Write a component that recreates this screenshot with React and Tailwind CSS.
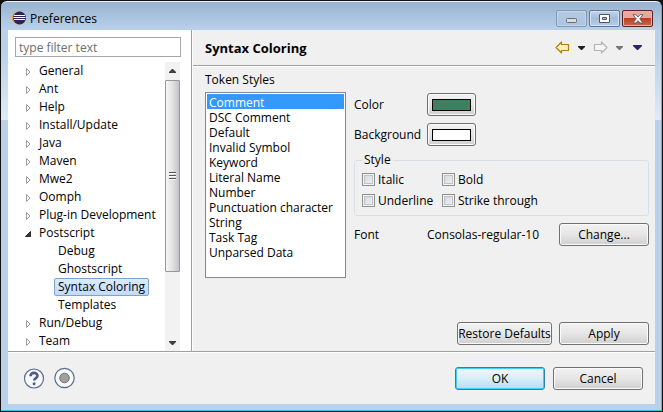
import { useState } from "react";

const tree = [
  { name: "General" }, { name: "Ant" }, { name: "Help" }, { name: "Install/Update" },
  { name: "Java" }, { name: "Maven" }, { name: "Mwe2" }, { name: "Oomph" },
  { name: "Plug-in Development" },
  { name: "Postscript", open: true },
  { name: "Debug", child: true }, { name: "Ghostscript", child: true },
  { name: "Syntax Coloring", child: true }, { name: "Templates", child: true },
  { name: "Run/Debug" }, { name: "Team" },
];

const tokens = [
  "Comment", "DSC Comment", "Default", "Invalid Symbol", "Keyword", "Literal Name",
  "Number", "Punctuation character", "String", "Task Tag", "Unparsed Data",
];

const face =
  "rounded-[3px] border border-[#707070] bg-linear-to-b from-[#f2f2f2] via-[#e6e6e6] to-[#cfcfcf] shadow-[inset_0_0_0_1px_#fafafa]";

function Button({ children, className = "w-[90px]" }) {
  return (
    <button type="button" className={`${face} h-[23px] shrink-0 text-center whitespace-nowrap ${className}`}>
      {children}
    </button>
  );
}

function Twisty({ open }) {
  return (
    <svg className="h-[12px] w-[8px] shrink-0" viewBox="0 0 8 12" aria-hidden="true">
      {open ? (
        <path d="M5.5 4.500v5h-5z" fill="#404040" stroke="#262626" />
      ) : (
        <path d="M1.500 3.500v7L5 7z" fill="#fff" stroke="#9c9c9c" />
      )}
    </svg>
  );
}

function Down({ color }) {
  return (
    <svg className="h-[4px] w-[7px]" viewBox="0 0 7 4" aria-hidden="true">
      <path d="M0 0h7v1L4 4H3L0 1z" fill={color} />
    </svg>
  );
}

function Arrow({ flip, fill, stroke }) {
  return (
    <svg className={`h-[13px] w-[15px] ${flip ? "-scale-x-100" : ""}`} viewBox="0 0 15 13" aria-hidden="true">
      <path d="M1 6.500L6.500 1v2.500h7v6h-7V12z" fill={fill} stroke={stroke} strokeWidth="1.200" strokeLinejoin="round" />
    </svg>
  );
}

function Swatch({ label, color }) {
  return (
    <div className="flex h-[23px] items-center">
      <span className="w-[73px]">{label}</span>
      <button type="button" aria-label={label} className={`${face} flex h-[23px] w-[49px] items-center justify-center`}>
        <span className={`h-[12px] w-[39px] border border-black ${color}`} />
      </button>
    </div>
  );
}

function Check({ label }) {
  return (
    <label className="flex h-[13px] items-center gap-[3px]">
      <input
        type="checkbox"
        className="size-[13px] appearance-none border border-[#8e8f8f] bg-linear-to-br from-[#cfd3d8] to-[#f6f6f6] shadow-[inset_0_0_0_1px_#f4f4f4,inset_0_0_0_2px_#bfc3c8] checked:from-[#4b6c9e]"
      />
      {label}
    </label>
  );
}

export default function App() {
  const [token, setToken] = useState("Comment");
  return (
    <div className="flex min-h-screen flex-col bg-[#111] p-px font-['Open_Sans','Noto_Sans',sans-serif] text-[12px] leading-[18px] text-black">
      <div className="flex grow flex-col rounded-t-[6px] border-t border-r border-b border-t-[#eef4fb] border-r-[#35c8e8] border-b-[#35c8e8] bg-[linear-gradient(to_bottom,#99b4d1,#b9d1ea_28px,#b9d1ea_50px,#dfeaf6_118px,#b9d1ea_118px)] pr-[6px] pb-[6px] pl-[7px]">
        <header className="flex h-[28px] items-start">
          <svg className="mt-[9px] ml-[4px] size-[14px]" viewBox="0 0 14 14" aria-hidden="true">
            <circle cx="6.500" cy="7" r="6.500" fill="#f7941e" />
            <circle cx="7.600" cy="7" r="6.400" fill="#2c2255" />
            <path d="M2 4.500h11M1.500 6.500h12M2 8.500h11" stroke="#fff" strokeWidth="1" />
          </svg>
          <h1 className="mt-[8px] ml-[4px] grow">Preferences</h1>
          <div className="mt-[8px] mr-[2px] flex gap-[2px]">
            <button type="button" aria-label="Minimize" className="flex h-[17px] w-[31px] items-center justify-center rounded-[2px] border border-[#8298b5] bg-linear-to-b from-[#b5cae2] to-[#adc4de] shadow-[inset_0_0_0_1px_#c3d5e9]">
              <svg className="h-[11px] w-[12px]" viewBox="0 0 12 11"><rect x=".5" y="5.500" width="10" height="4" rx="1" fill="#dcdcdc" stroke="#666b75" /></svg>
            </button>
            <button type="button" aria-label="Maximize" className="flex h-[17px] w-[31px] items-center justify-center rounded-[2px] border border-[#5f7795] bg-linear-to-b from-[#c2d6ec] via-[#a4bcd8] to-[#b5d0ec] shadow-[inset_0_0_0_1px_#d5e4f4]">
              <svg className="h-[9px] w-[11px]" viewBox="0 0 11 9"><path d="M.5 .5h10v8H.5z" fill="#fff" stroke="#535666" /><path d="M3.500 3.500h4v2h-4z" fill="#a4bcd8" stroke="#535666" /></svg>
            </button>
            <button type="button" aria-label="Close" className="flex h-[17px] w-[31px] items-center justify-center rounded-[2px] border border-[#5c1f22] bg-linear-to-b from-[#e8a99b] from-45% via-[#bf3a22] via-50% to-[#d0664c] shadow-[inset_0_0_0_1px_#e9b3a8]">
              <svg className="h-[10px] w-[12px]" viewBox="0 0 12 10"><path d="M1 .7h3L6 3 8 .7h3L7.800 4.800 11 9H8L6 6.700 4 9H1l3.200-4.200z" fill="#fff" stroke="#535666" strokeWidth=".9" /></svg>
            </button>
          </div>
        </header>

        <div className="flex grow flex-col bg-[#f0f0f0]">
          <div className="flex grow border-b border-[#a0a0a0]">
            <aside className="flex w-[184px] shrink-0 flex-col border-r border-[#a0a0a0] bg-white pt-[7px] pl-[7px]">
              <input
                type="text"
                aria-label="Filter"
                placeholder="type filter text"
                className="mb-[5px] h-[20px] w-[166px] border border-[#a5a7ad] bg-white px-[3px] placeholder:text-[#6d6d6d]"
              />
              <div className="flex grow">
                <ul className="w-[150px]">
                  {tree.map((n) => (
                    <li key={n.name} className={`flex h-[18px] items-center ${n.child ? "pl-[39px]" : "gap-[5px] pl-[10px]"}`}>
                      {!n.child && <Twisty open={n.open} />}
                      <button
                        type="button"
                        className={`h-[18px] border whitespace-nowrap leading-[16px] ${
                          n.name === "Syntax Coloring"
                            ? "rounded-[2px] border-[#7da2ce] bg-linear-to-b from-[#dcebfc] to-[#c1dbfc] px-[3px]"
                            : n.child ? "border-transparent px-[3px]" : "border-transparent px-0"
                        }`}
                      >
                        {n.name}
                      </button>
                    </li>
                  ))}
                </ul>
                <div className="flex w-[15px] flex-col items-center bg-[#f2f2f2]">
                  <button type="button" aria-label="Scroll up" className="flex h-[18px] w-full items-center justify-center">
                    <span className="-scale-y-100"><Down color="#404040" /></span>
                  </button>
                  <div className="flex h-[192px] w-full flex-col items-center justify-center gap-px rounded-[1px] border border-[#979797] bg-linear-to-r from-[#f5f5f5] via-[#e2e2e4] to-[#c3c3c8]">
                    <span className="h-[2px] w-[7px] border-b border-white bg-[#555]" />
                    <span className="h-[2px] w-[7px] border-b border-white bg-[#555]" />
                    <span className="h-[2px] w-[7px] border-b border-white bg-[#555]" />
                  </div>
                  <button type="button" aria-label="Scroll down" className="mt-auto flex h-[17px] w-full items-center justify-center">
                    <Down color="#404040" />
                  </button>
                </div>
              </div>
            </aside>

            <main className="flex grow flex-col border-l border-white">
              <div className="flex h-[36px] items-center border-b border-[#a0a0a0] pr-[13px] pl-[12px]">
                <h2 className="grow text-[13px] font-bold">Syntax Coloring</h2>
                <div className="flex items-center">
                  <button type="button" aria-label="Back"><Arrow fill="#fdf0b8" stroke="#b87a14" /></button>
                  <button type="button" aria-label="Back history" className="ml-[8px]"><Down color="#222" /></button>
                  <button type="button" aria-label="Forward" className="ml-[8px]"><Arrow flip fill="#f6f6f6" stroke="#b4b4b4" /></button>
                  <button type="button" aria-label="Forward history" className="ml-[8px]"><Down color="#777" /></button>
                  <button type="button" aria-label="Menu" className="ml-[10px]">
                    <svg className="h-[5px] w-[9px]" viewBox="0 0 9 5" aria-hidden="true">
                      <path d="M0 0h9v1L5 5H4L0 1z" fill="#35206b" />
                    </svg>
                  </button>
                </div>
              </div>
              <div className="flex grow flex-col border-t border-white pr-[6px] pb-[6px] pl-[12px]">
                <label htmlFor="tokens" className="mt-[4px] mb-[3px]">Token Styles</label>
                <div className="flex gap-[8px]">
                  <select
                    id="tokens"
                    size={12}
                    value={token}
                    onChange={(e) => setToken(e.target.value)}
                    className="h-[186px] w-[141px] shrink-0 appearance-none overflow-hidden border border-[#828790] bg-white p-px"
                  >
                    {tokens.map((t) => (
                      <option key={t} className="h-[15px] min-h-0 px-[2px] py-0 leading-[15px] checked:bg-linear-to-b checked:from-[#3399ff] checked:to-[#3399ff] checked:text-white">
                        {t}
                      </option>
                    ))}
                  </select>
                  <div className="flex grow flex-col pt-px">
                    <div className="flex flex-col gap-[7px]">
                      <Swatch label="Color" color="bg-[#3f7f5f]" />
                      <Swatch label="Background" color="bg-white" />
                    </div>
                    <fieldset className="mt-[5px] rounded-[3px] border border-[#d5dfe5] px-[7px] pb-[8px]">
                      <legend className="px-[2px]">Style</legend>
                      <div className="grid grid-cols-[80px_1fr] gap-y-[8px] pt-[4px]">
                        <Check label="Italic" />
                        <Check label="Bold" />
                        <Check label="Underline" />
                        <Check label="Strike through" />
                      </div>
                    </fieldset>
                    <div className="mt-[7px] flex items-center">
                      <span className="w-[73px]">Font</span>
                      <span className="grow">Consolas-regular-10</span>
                      <Button>Change...</Button>
                    </div>
                  </div>
                </div>
                <div className="mt-auto flex justify-end gap-[7px] pt-[12px]">
                  <Button className="w-[95px]">Restore Defaults</Button>
                  <Button>Apply</Button>
                </div>
              </div>
            </main>
          </div>

          <footer className="flex h-[52px] items-center gap-[8px] border-t border-white pr-[12px] pl-[15px]">
            <button type="button" aria-label="Help">
              <svg className="size-[22px]" viewBox="0 0 22 22">
                <circle cx="11" cy="10.500" r="9.500" fill="#f8f9fb" stroke="#5c6b8c" strokeWidth="1.200" />
                <path d="M7.500 8.200c0-2.200 1.500-3.300 3.500-3.300s3.500 1.100 3.500 2.900c0 2.400-3.300 2.300-3.300 4.800" fill="none" stroke="#4c5d87" strokeWidth="2.600" />
                <circle cx="11.100" cy="15.800" r="1.500" fill="#4c5d87" />
              </svg>
            </button>
            <button type="button" aria-label="Record">
              <svg className="size-[23px]" viewBox="0 0 23 23">
                <circle cx="11.500" cy="11" r="9.700" fill="#f8f9fb" stroke="#5c6b8c" strokeWidth="1.200" />
                <circle cx="11.500" cy="11" r="4.800" fill="#a0a0a0" stroke="#747474" />
              </svg>
            </button>
            <div className="ml-auto flex gap-[8px]">
              <button type="button" className="h-[23px] w-[90px] rounded-[3px] border border-[#2c7fb0] bg-linear-to-b from-[#eef8fd] via-[#d8eef9] to-[#b4dcf0] shadow-[inset_0_0_0_1px_#3fd0f8]">OK</button>
              <Button>Cancel</Button>
            </div>
          </footer>
        </div>
      </div>
    </div>
  );
}
